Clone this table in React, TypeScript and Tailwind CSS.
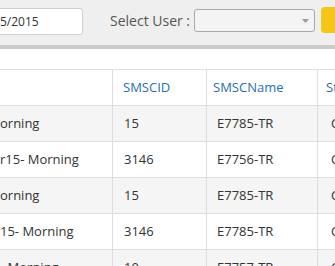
import React from "react";

const rows = [
  { name: "orning", id: "15", sname: "E7785-TR", st: "Completed", bg: "bg-[#f5f5f5]" },
  { name: "r15- Morning", id: "3146", sname: "E7756-TR", st: "Completed", bg: "bg-white" },
  { name: "orning", id: "15", sname: "E7785-TR", st: "Completed", bg: "bg-[#f5f5f5]" },
  { name: "15- Morning", id: "3146", sname: "E7785-TR", st: "Completed", bg: "bg-white" },
  { name: "- Morning", id: "10", sname: "E7757-TR", st: "Completed", bg: "bg-[#f5f5f5]" },
];

export default function App() {
  return (
    <div
      className="w-[335px] h-[266px] overflow-hidden bg-white"
      style={{ fontFamily: '"Open Sans", "Noto Sans", sans-serif' }}
    >
      {/* Top filter bar */}
      <div className="h-[45px] bg-[#efefef] flex items-start overflow-hidden">
        <div className="mt-[8px] -ml-[33px] w-[116px] h-[27px] shrink-0 rounded-[3px] border border-[#cfcfcf] bg-white flex items-center pl-[7px] text-[12px] text-[#333] whitespace-nowrap">
          05/05/2015
        </div>
        <div className="ml-[27px] mt-[11px] text-[14px] leading-[19px] text-[#555] whitespace-nowrap shrink-0">
          Select User :
        </div>
        <div className="ml-[4px] mt-[9px] w-[121px] h-[23px] shrink-0 rounded-[3px] border border-[#a9a9a9] bg-[#f4f4f4] flex items-center justify-end pr-[5px]">
          <svg width="7" height="4" viewBox="0 0 7 4">
            <path d="M0 0 L7 0 L3.5 4 Z" fill="#9a9a9a" />
          </svg>
        </div>
        <div className="ml-[6px] mt-[7px] w-[40px] h-[26px] shrink-0 rounded-[4px] bg-[#f5c518]" />
      </div>
      <div className="h-[4px] bg-[#cbcbcb]" />

      {/* Table */}
      <div className="mt-[20px] border-t border-[#dddddd] text-[13px] text-[#333]">
        <div className="h-[36px] flex border-b border-[#dddddd] bg-white text-[#2a6db5]">
          <div className="w-[113px] shrink-0 border-r border-[#dddddd]" />
          <div className="w-[94px] shrink-0 border-r border-[#dddddd] flex items-center pl-[10px]">SMSCID</div>
          <div className="w-[111px] shrink-0 border-r border-[#dddddd] flex items-center pl-[6px]">SMSCName</div>
          <div className="flex-1 flex items-center pl-[8px] whitespace-nowrap overflow-hidden">Status</div>
        </div>
        {rows.map((r, i) => (
          <div key={i} className={`h-[36px] flex border-b border-[#dddddd] ${r.bg}`}>
            <div className="w-[113px] shrink-0 border-r border-[#dddddd] flex items-center whitespace-nowrap overflow-hidden">
              {r.name}
            </div>
            <div className="w-[94px] shrink-0 border-r border-[#dddddd] flex items-center pl-[11px]">{r.id}</div>
            <div className="w-[111px] shrink-0 border-r border-[#dddddd] flex items-center pl-[10px]">{r.sname}</div>
            <div className="flex-1 flex items-center pl-[13px] whitespace-nowrap overflow-hidden">{r.st}</div>
          </div>
        ))}
      </div>
    </div>
  );
}
